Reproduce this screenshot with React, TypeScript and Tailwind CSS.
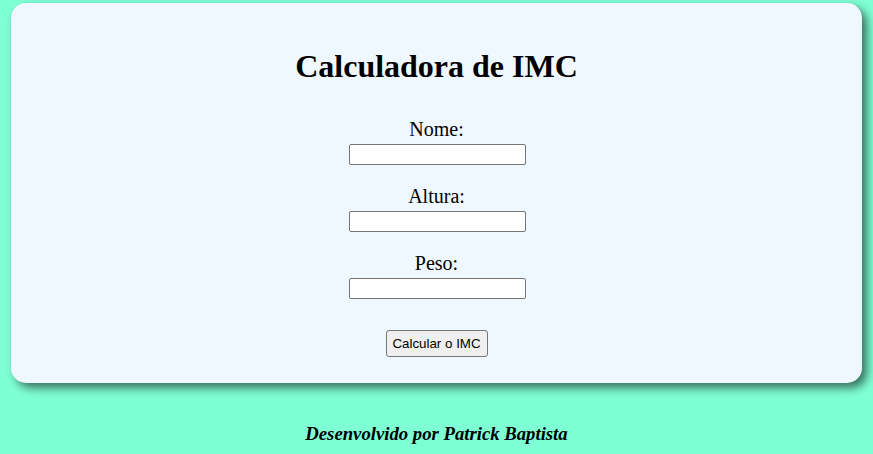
import React from "react";

export default function App() {
  const serif = { fontFamily: '"Liberation Serif", "Times New Roman", serif' };
  const fields = ["Nome:", "Altura:", "Peso:"];
  return (
    <div className="min-h-[454px] w-[873px] bg-[#7fffd4] pt-[3px] text-black" style={serif}>
      <div className="ml-[11px] flex h-[380px] w-[851px] flex-col items-center rounded-[15px] bg-[#f0f8ff] pt-[45px] shadow-[5px_5px_10px_rgba(0,0,0,0.55)]">
        <h1 className="text-[32px] font-bold leading-[37px]">Calculadora de IMC</h1>
        <div className="mt-[33px] flex flex-col items-center gap-[20px]">
          {fields.map((f) => (
            <div key={f} className="flex flex-col items-center">
              <label className="text-[20px] leading-[23px]">{f}</label>
              <input
                type="text"
                className="ml-[2px] mt-[3px] h-[21px] w-[177px] rounded-[2px] border border-[#767676] bg-white px-[2px] text-[13px]"
              />
            </div>
          ))}
        </div>
        <button
          className="mt-[31px] h-[27px] w-[102px] rounded-[3px] border border-[#767676] bg-[#efefef] text-[13.33px] text-black"
          style={{ fontFamily: '"Liberation Sans", Arial, sans-serif' }}
        >
          Calcular o IMC
        </button>
      </div>
      <h3 className="mt-[40px] text-center text-[18.72px] font-bold italic leading-[21px]">
        Desenvolvido por Patrick Baptista
      </h3>
    </div>
  );
}
